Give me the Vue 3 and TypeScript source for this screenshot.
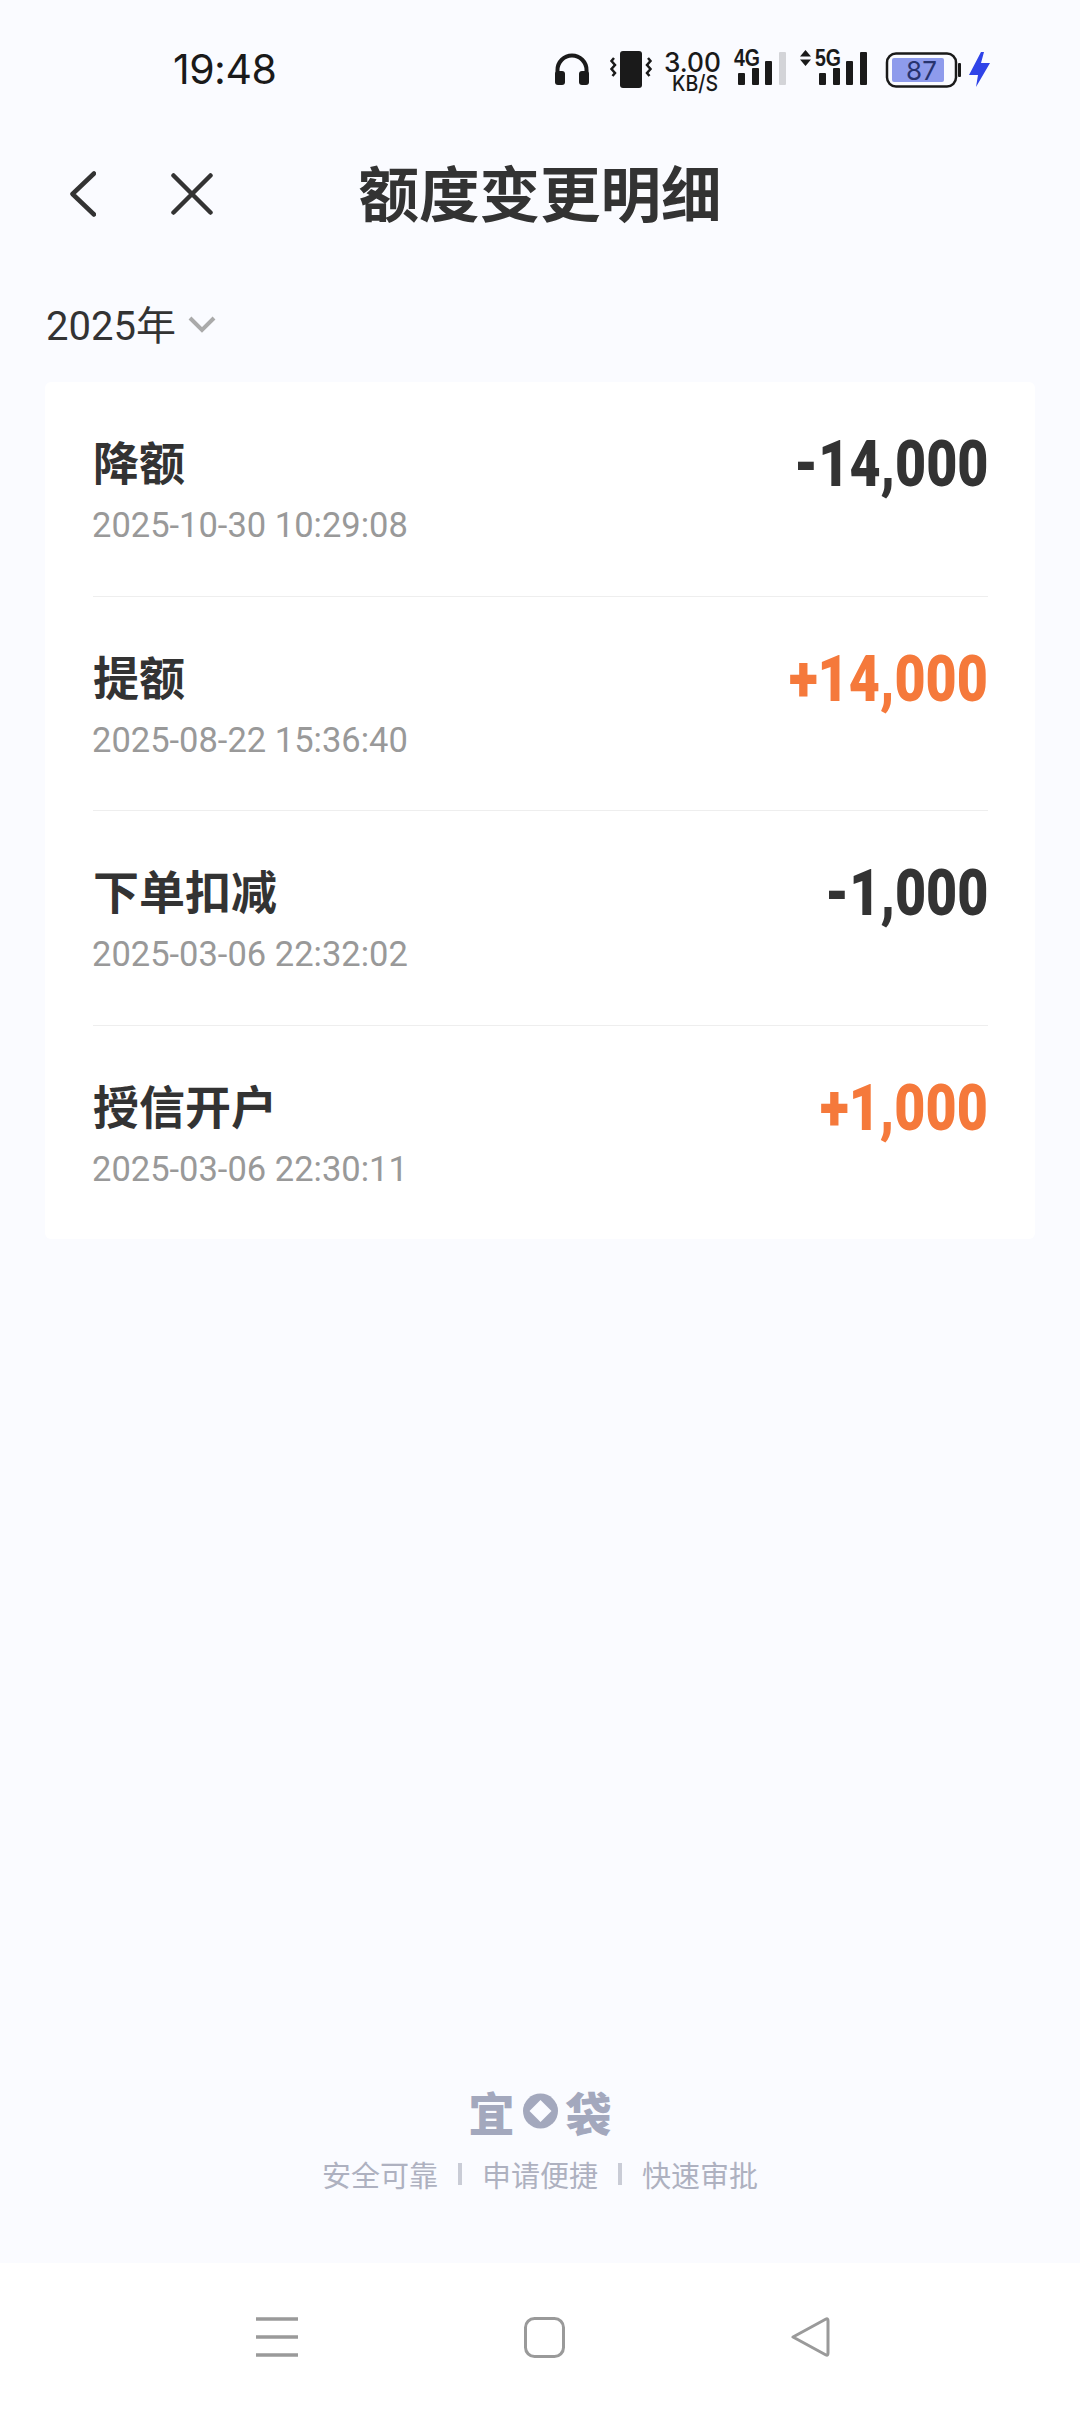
<template>
  <div class="page">
    <!-- status bar -->
    <div class="status-bar">
      <span class="time">19:48</span>
      <svg class="status-icons" viewBox="555 40 435 60" width="435" height="60">
        <!-- headphones -->
        <path d="M557.500 74v-4a14.500 14.500 0 0 1 29 0v4" fill="none" stroke="#1a1a1a" stroke-width="4" />
        <rect x="555" y="71" width="10" height="14" rx="3" fill="#1a1a1a" />
        <rect x="579" y="71" width="10" height="14" rx="3" fill="#1a1a1a" />
        <!-- vibrate -->
        <rect x="620" y="51" width="22" height="37" rx="3" fill="#1a1a1a" />
        <path d="M614 58l-2.500 3 3.500 4-3.500 4 3.500 4-2.500 3M648 58l2.500 3-3.500 4 3.500 4-3.500 4 2.500 3" fill="none" stroke="#1a1a1a" stroke-width="2.500" />
        <!-- speed -->
        <text x="664" y="72" textLength="57" lengthAdjust="spacingAndGlyphs" class="speed-num">3.00</text>
        <text x="672" y="91" textLength="46" lengthAdjust="spacingAndGlyphs" class="speed-unit">KB/S</text>
        <!-- 4G -->
        <text x="734" y="66" textLength="26" lengthAdjust="spacingAndGlyphs" class="net">4G</text>
        <rect x="738" y="73" width="7" height="12" rx="1" fill="#1a1a1a" />
        <rect x="752" y="68" width="7" height="17" rx="1" fill="#1a1a1a" />
        <rect x="765" y="61" width="7" height="24" rx="1" fill="#1a1a1a" />
        <rect x="779" y="52" width="7" height="33" rx="1" fill="#d3d4d8" />
        <!-- 5G -->
        <path d="M805.500 50l5.500 6.500h-11zM805.500 66l5.500-6.500h-11z" fill="#1a1a1a" />
        <text x="815" y="66" textLength="26" lengthAdjust="spacingAndGlyphs" class="net">5G</text>
        <rect x="819" y="73" width="7" height="12" rx="1" fill="#1a1a1a" />
        <rect x="833" y="68" width="7" height="17" rx="1" fill="#1a1a1a" />
        <rect x="846" y="61" width="7" height="24" rx="1" fill="#1a1a1a" />
        <rect x="860" y="52" width="7" height="33" rx="1" fill="#1a1a1a" />
        <!-- battery -->
        <rect x="887" y="53.500" width="69" height="33" rx="9" fill="none" stroke="#1a1a1a" stroke-width="2.500" />
        <rect x="892" y="58" width="52" height="24" rx="2" fill="#8e9bec" />
        <text x="921.500" y="80" text-anchor="middle" class="batt">87</text>
        <rect x="958" y="63" width="3" height="14" rx="1" fill="#1a1a1a" />
        <!-- charging bolt -->
        <path d="M981 52l-12 23h9l-2 12 14-24h-9l3-11z" fill="#2f43e8" />
      </svg>
    </div>

    <!-- header -->
    <header class="header">
      <div class="header-btns">
        <svg width="26" height="46" viewBox="0 0 26 46">
          <path d="M24 2.500L2.500 23 24 43.500" fill="none" stroke="#333" stroke-width="4.500" stroke-linecap="round" stroke-linejoin="round" />
        </svg>
        <svg width="42" height="42" viewBox="0 0 42 42">
          <path d="M2.500 2.500l37 37M39.500 2.500l-37 37" fill="none" stroke="#333" stroke-width="4.500" stroke-linecap="round" />
        </svg>
      </div>
      <h1 class="title">额度变更明细</h1>
      <div></div>
    </header>

    <!-- year picker -->
    <div class="year-row">
      <span class="year">2025年</span>
      <svg class="year-arrow" width="28" height="17" viewBox="0 0 28 17">
        <path d="M2 2l12 12L26 2" fill="none" stroke="#aaa" stroke-width="4" />
      </svg>
    </div>

    <!-- records -->
    <div class="card">
      <div v-for="item in records" :key="item.time" class="row">
        <div class="row-left">
          <div class="row-title">{{ item.title }}</div>
          <div class="row-time">{{ item.time }}</div>
        </div>
        <div class="row-amount" :class="{ plus: item.amount.startsWith('+') }">{{ item.amount }}</div>
      </div>
    </div>

    <!-- brand footer -->
    <footer class="footer">
      <div class="logo">
        <span>宜</span>
        <svg width="35" height="36" viewBox="0 0 35 36">
          <circle cx="17.500" cy="18" r="17.500" fill="#a3a8bd" />
          <path d="M17.500 7l11 11-11 11-11-11z" fill="#fafbff" />
        </svg>
        <span>袋</span>
      </div>
      <div class="slogan">
        <span>安全可靠</span>
        <i class="sep"></i>
        <span>申请便捷</span>
        <i class="sep"></i>
        <span>快速审批</span>
      </div>
    </footer>

    <!-- navigation bar -->
    <nav class="nav">
      <svg width="42" height="40" viewBox="0 0 42 40">
        <path d="M0 2h42M0 20h42M0 38h42" stroke="#9a9a9a" stroke-width="3.500" />
      </svg>
      <svg width="41" height="41" viewBox="0 0 41 41">
        <rect x="1.500" y="1.500" width="38" height="38" rx="9" fill="none" stroke="#9a9a9a" stroke-width="3" />
      </svg>
      <svg width="40" height="40" viewBox="0 0 40 40">
        <path d="M3 20L36 2q2-1 2 2v32q0 3-2 2z" fill="none" stroke="#9a9a9a" stroke-width="3" stroke-linejoin="round" />
      </svg>
    </nav>
  </div>
</template>

<script setup lang="ts">
interface LimitRecord {
  title: string
  time: string
  amount: string
}

const records: LimitRecord[] = [
  { title: '降额', time: '2025-10-30 10:29:08', amount: '-14,000' },
  { title: '提额', time: '2025-08-22 15:36:40', amount: '+14,000' },
  { title: '下单扣减', time: '2025-03-06 22:32:02', amount: '-1,000' },
  { title: '授信开户', time: '2025-03-06 22:30:11', amount: '+1,000' },
]
</script>

<style>
html, body { background: #fafbff; }
</style>

<style scoped>
.page {
  width: 1080px;
  height: 2412px;
  display: flex;
  flex-direction: column;
  background: #fafbff;
  color: #333;
  font-family: Roboto, "Noto Sans CJK SC", sans-serif;
  overflow: hidden;
}

/* status bar */
.status-bar {
  height: 125px;
  box-sizing: border-box;
  padding: 40px 90px 0 173px;
  display: flex;
  justify-content: space-between;
  align-items: flex-start;
}
.time { margin-top: 9px; font: 400 41px/40px Inter, sans-serif; color: #1a1a1a; letter-spacing: -.5px; }
.speed-num { font: 500 27px Inter, sans-serif; fill: #1a1a1a; }
.speed-unit { font: 500 22px Inter, sans-serif; fill: #1a1a1a; }
.net { font: 700 23px "Liberation Sans", sans-serif; fill: #1a1a1a; }
.batt { font: 400 26px Inter, sans-serif; fill: #27336f; }

/* header */
.header {
  height: 140px;
  display: grid;
  grid-template-columns: 1fr auto 1fr;
  align-items: center;
}
.header-btns { display: flex; align-items: center; gap: 75px; padding-left: 70px; margin-top: -2px; }
.title { margin: 0 0 8px; font: 700 60.500px/1 "Noto Sans CJK SC", sans-serif; color: #333; }

/* year */
.year-row {
  height: 117px;
  box-sizing: border-box;
  padding: 36px 0 33px 46px;
  display: flex;
  align-items: center;
  gap: 12px;
}
.year { margin-top: 3px; font-size: 40px; line-height: 48px; color: #333; }
.year-arrow { margin-top: -1px; }

/* list */
.card {
  margin: 0 45px;
  padding: 0 47px 0 48px;
  background: #fff;
  border-radius: 6px;
}
.row {
  padding-top: 45px;
  height: 168.500px;
  display: flex;
  justify-content: space-between;
  align-items: flex-start;
  border-bottom: 1px solid #eeeeee;
}
.row:last-child { border-bottom: none; }
.row-title { margin-top: -2px; font: 700 46px/70px "Noto Sans CJK SC", sans-serif; color: #333; }
.row-time { margin-top: 12px; font-size: 34.500px; line-height: 36px; color: #999; margin-left: -1px; }
.row-amount {
  margin-top: 3px;
  font-weight: 900;
  font-size: 64px;
  line-height: 70px;
  color: #333;
  transform: scaleX(.84);
  transform-origin: right center;
}
.row-amount.plus { color: #f5793b; }

/* footer */
.footer {
  margin-top: auto;
  padding-bottom: 71px;
  display: flex;
  flex-direction: column;
  align-items: center;
  color: #aeb1c0;
}
.logo {
  display: flex;
  align-items: center;
  gap: 8px;
  height: 52px;
  font: 900 46px/52px "Noto Sans CJK SC", sans-serif;
  color: #a3a8bd;
}
.slogan {
  margin-top: 19px;
  display: flex;
  align-items: center;
  gap: 20px;
  font: 400 29px/36px "Noto Sans CJK SC", sans-serif;
}
.sep { width: 4px; height: 22px; background: #c9ccd6; }

/* nav */
.nav {
  height: 149px;
  box-sizing: border-box;
  padding: 54px 250px 0 256px;
  display: flex;
  justify-content: space-between;
  align-items: flex-start;
  background: #fff;
}
</style>
